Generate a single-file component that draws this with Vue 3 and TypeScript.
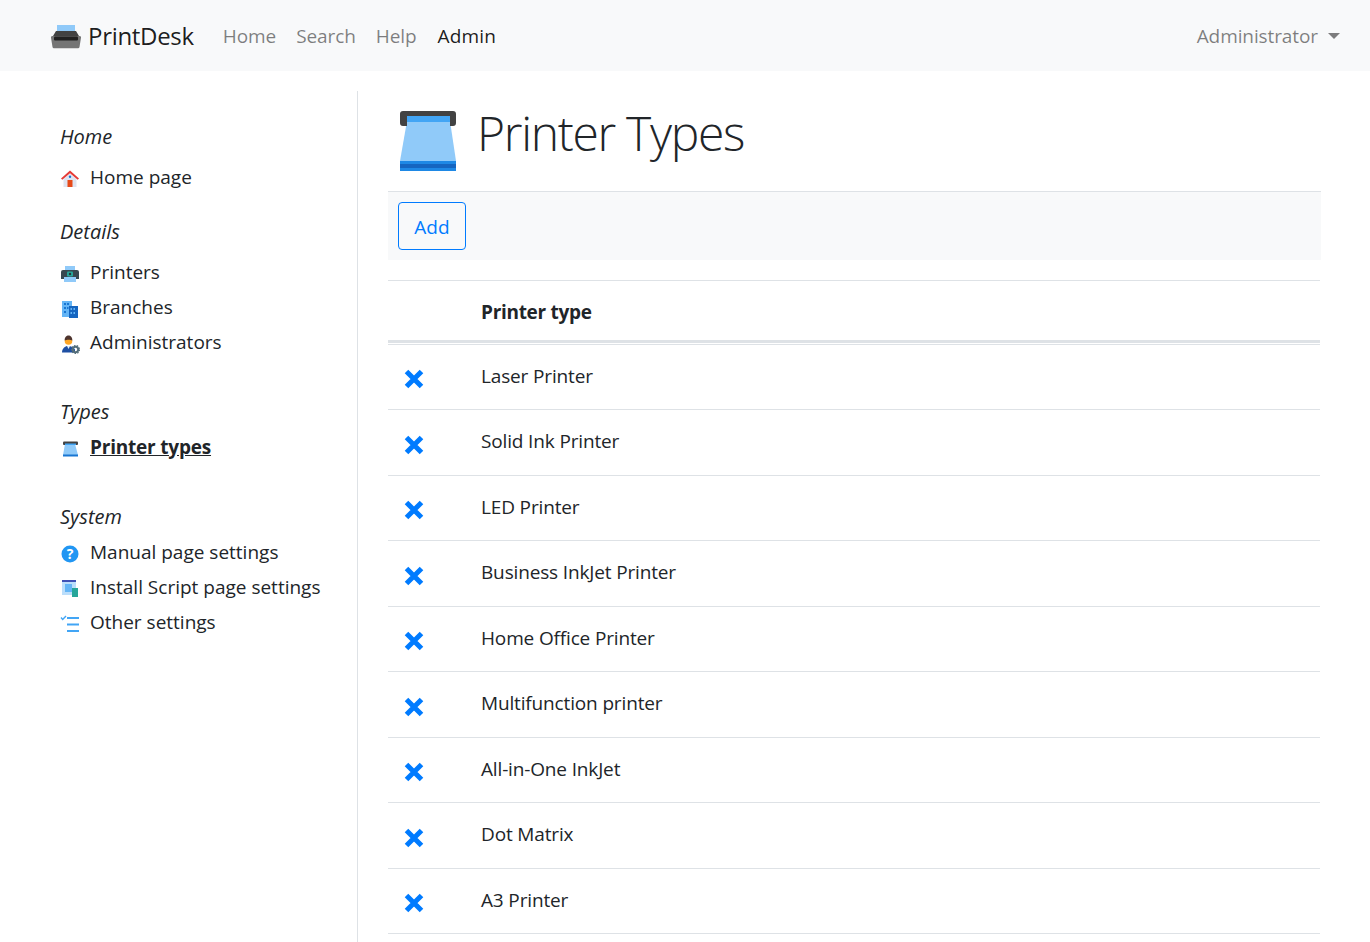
<script setup lang="ts">
const types: string[] = ['Laser Printer','Solid Ink Printer','LED Printer','Business InkJet Printer','Home Office Printer','Multifunction printer','All-in-One InkJet','Dot Matrix','A3 Printer']
</script>

<template>
  <div class="page">
    <nav class="navbar">
      <a class="brand">
        <svg class="brand-icon" viewBox="0 0 30 26" width="30" height="26">
          <path d="M6 2h18v7H6z" fill="#90caf9"/>
          <path d="M5 8h20l3 5v2H2v-2z" fill="#424242"/>
          <path d="M1.500 13h27a1.500 1.500 0 0 1 1.500 1.700L28.500 24a1.500 1.500 0 0 1-1.500 1.200H3A1.500 1.500 0 0 1 1.500 24L0 14.700A1.500 1.500 0 0 1 1.500 13z" fill="#757575"/>
          <rect x="3" y="13.500" width="24" height="4" rx="1" fill="#212121"/>
        </svg>
        <span>PrintDesk</span>
      </a>
      <a class="nav-link">Home</a>
      <a class="nav-link">Search</a>
      <a class="nav-link">Help</a>
      <a class="nav-link active">Admin</a>
      <a class="nav-link user">Administrator<i class="caret"></i></a>
    </nav>
    <div class="body-row">
      <aside class="sidebar">
        <section class="group">
          <h6 class="spaced">Home</h6>
          <a class="item">
            <svg viewBox="0 0 20 20" class="ic"><path d="M3.500 10 10 4.500 16.500 10v8h-13z" fill="#dfe3f0"/><path d="M10 1.500 1 9.500l1.300 1.300L10 4.300l7.700 6.500L19 9.500z" fill="#e53935"/><rect x="7.500" y="11" width="5" height="7" fill="#e64a19"/><circle cx="10" cy="7.800" r="1.200" fill="#1976d2"/></svg>
            <span>Home page</span>
          </a>
        </section>
        <section class="group">
          <h6 class="spaced">Details</h6>
          <a class="item">
            <svg viewBox="0 0 20 20" class="ic"><rect x="5" y="2" width="10" height="5" fill="#90caf9"/><path d="M3 6h14a2 2 0 0 1 2 2v7H1V8a2 2 0 0 1 2-2z" fill="#37474f"/><rect x="4" y="13" width="12" height="5" fill="#90caf9"/><rect x="7" y="7.500" width="6" height="5" rx="1" fill="#26a69a"/><circle cx="10" cy="10" r="1.200" fill="#263238"/></svg>
            <span>Printers</span>
          </a>
          <a class="item">
            <svg viewBox="0 0 20 20" class="ic"><rect x="2" y="2" width="10" height="16" fill="#64b5f6"/><rect x="9" y="7" width="9" height="12" fill="#1565c0"/><path d="M4 4h2v2H4zm3 0h2v2H7zM4 8h2v2H4zm0 4h2v2H4zm3-4h1.500v2H7z" fill="#1976d2"/><path d="M10.500 9H12v2h-1.500zm3 0H15v2h-1.500zm-3 4H12v2h-1.500zm3 0H15v2h-1.500z" fill="#64b5f6"/></svg>
            <span>Branches</span>
          </a>
          <a class="item">
            <svg viewBox="0 0 20 20" class="ic"><path d="M2 18.500c0-4 3-6.500 6-6.500s6 1.500 7 3.500v3z" fill="#1e4fa3"/><path d="M7 12h3l-1.500 3z" fill="#e3f2fd"/><circle cx="8.500" cy="7" r="3.800" fill="#ffa726"/><path d="M4.700 6.500C4.500 3 6.500 1.500 8.500 1.500s4 1.500 3.800 5C10.500 5.500 6.500 5.500 4.700 6.500z" fill="#4e342e"/><circle cx="15.500" cy="15.500" r="2.700" fill="none" stroke="#546e7a" stroke-width="2"/><circle cx="15.500" cy="15.500" r="4" fill="none" stroke="#546e7a" stroke-width="1.200" stroke-dasharray="1.500 1.300"/></svg>
            <span>Administrators</span>
          </a>
        </section>
        <section class="group">
          <h6>Types</h6>
          <a class="item current">
            <svg viewBox="0 0 20 20" class="ic"><path d="M5 5h10l3 11H3z" fill="#90caf9"/><rect x="3" y="2.500" width="15" height="3.500" rx="1" fill="#424242"/><rect x="5" y="4.500" width="11" height="1.500" fill="#42a5f5"/><rect x="3" y="15.500" width="15" height="2" fill="#1976d2"/></svg>
            <span>Printer types</span>
          </a>
        </section>
        <section class="group">
          <h6>System</h6>
          <a class="item">
            <svg viewBox="0 0 20 20" class="ic"><circle cx="10" cy="10" r="8.500" fill="#2196f3"/><text x="10" y="15" text-anchor="middle" class="q">?</text></svg>
            <span>Manual page settings</span>
          </a>
          <a class="item">
            <svg viewBox="0 0 20 20" class="ic"><rect x="2" y="1" width="14" height="15" fill="#bbdefb"/><rect x="2" y="1" width="14" height="2" fill="#3f51b5"/><rect x="5" y="5" width="7" height="8" fill="#64b5f6"/><rect x="12" y="9" width="6" height="9" fill="#26a69a"/></svg>
            <span>Install Script page settings</span>
          </a>
          <a class="item">
            <svg viewBox="0 0 20 20" class="ic"><path d="M1 3.500 2.700 5.500 6 2" fill="none" stroke="#42a5f5" stroke-width="1.400"/><path d="M7 4h12M7 10.500h12M7 17h12" stroke="#42a5f5" stroke-width="1.800"/></svg>
            <span>Other settings</span>
          </a>
        </section>
      </aside>
      <main class="content">
        <header class="title-row">
          <svg class="title-icon" viewBox="0 0 60 62" width="60" height="62">
            <path d="M8 11h43l6 40H1z" fill="#90caf9"/>
            <path d="M4 1h50a3 3 0 0 1 3 3v9a3 3 0 0 1-3 3h-3V6H8v10H4a3 3 0 0 1-3-3V4a3 3 0 0 1 3-3z" fill="#424242"/>
            <rect x="8" y="6" width="43" height="6" fill="#42a5f5"/>
            <rect x="1" y="51" width="56" height="10" fill="#1e88e5"/>
            <rect x="1" y="54" width="56" height="4" fill="#1565c0"/>
          </svg>
          <h1>Printer Types</h1>
        </header>
        <div class="toolbar"><button class="add">Add</button></div>
        <table class="grid">
          <thead><tr><th class="c1"></th><th>Printer type</th></tr></thead>
          <tbody>
            <tr v-for="t in types" :key="t">
              <td class="c1">
                <svg class="x" viewBox="0 0 20 20" width="20" height="20"><path d="M2.500 2.500l15 15M17.500 2.500l-15 15" stroke="#007bff" stroke-width="5"/></svg>
              </td>
              <td>{{ t }}</td>
            </tr>
          </tbody>
        </table>
      </main>
    </div>
  </div>
</template>

<style>
html, body { margin: 0; background: #fff; overflow: hidden; }
</style>

<style scoped>
.page { font-family: "Open Sans", "Liberation Sans", sans-serif; font-size: 19px; color: #212529; height: 942px; overflow: hidden; }
.navbar { display: flex; align-items: center; height: 71px; background: #f8f9fa; padding: 0 30px 0 51px; box-sizing: border-box; letter-spacing: -0.1px; }
.brand { display: flex; align-items: center; gap: 7px; font-size: 24px; letter-spacing: -0.3px; color: rgba(0,0,0,.9); margin-right: 29px; }
.nav-link { color: rgba(0,0,0,.5); margin-right: 20px; }
.nav-link.active { color: rgba(0,0,0,.9); margin-left: 1px; letter-spacing: 0.2px; }
.nav-link.user { margin-left: auto; margin-right: 0; display: flex; align-items: center; }
.caret { display: inline-block; margin-left: 10px; border-top: 6px solid rgba(0,0,0,.5); border-left: 6px solid transparent; border-right: 6px solid transparent; }
.body-row { display: flex; padding-top: 20px; }
.sidebar { width: 358px; box-sizing: border-box; border-right: 1px solid #dee2e6; min-height: 860px; padding: 31px 0 0 60px; }
.group { margin-bottom: 37px; }
.group:first-child { margin-bottom: 22px; }
.group h6 { margin: 0 0 3px; font-size: 20px; font-weight: 400; font-style: italic; line-height: 30px; }
.group h6.spaced { margin-bottom: 8px; }
.item { display: flex; align-items: center; gap: 10px; height: 35px; }
.item span { padding-bottom: 2px; }
.item.current { font-weight: 700; letter-spacing: -0.2px; }
.item.current span { text-decoration: underline; }
.ic { width: 20px; height: 20px; flex: none; margin-top: 3px; }
.q { font: 700 14px "Open Sans", sans-serif; fill: #fff; }
.content { width: 933px; margin-left: 30px; }
.title-row { display: flex; align-items: center; height: 100px; padding-left: 11px; gap: 18px; box-sizing: border-box; }
.title-icon { flex: none; }
h1 { margin: 0; padding-bottom: 18px; font-size: 48px; font-weight: 300; letter-spacing: -1.3px; color: #212529; }
.toolbar { background: #f8f9fa; border-top: 1px solid #dee2e6; padding: 10px; height: 69px; box-sizing: border-box; }
.add { display: block; width: 68px; height: 48px; font: inherit; color: #007bff; background: transparent; border: 1px solid #007bff; border-radius: 4px; padding: 2px 0 0; }
.grid { width: 932px; margin-top: 20px; border-collapse: separate; border-spacing: 0; letter-spacing: -0.15px; }
th, td { text-align: left; padding: 0 12px; vertical-align: top; box-sizing: border-box; }
th { height: 63px; border-top: 1px solid #dee2e6; border-bottom: 3px solid #dee2e6; box-shadow: 0 1px 0 #fff, 0 2px 0 #dee2e6; font-weight: 700; letter-spacing: -0.3px; vertical-align: middle; padding-top: 3px; }
td { height: 65.5px; padding-top: 16px; line-height: 30px; border-bottom: 1px solid #dee2e6; }
tbody tr:first-child td { height: 67px; padding-top: 18px; }
.c1 { width: 81px; padding: 0 12px 0 16px; }
td.c1 { padding-top: 24.5px; }
tbody tr:first-child td.c1 { padding-top: 26px; }
.x { display: block; }
</style>
